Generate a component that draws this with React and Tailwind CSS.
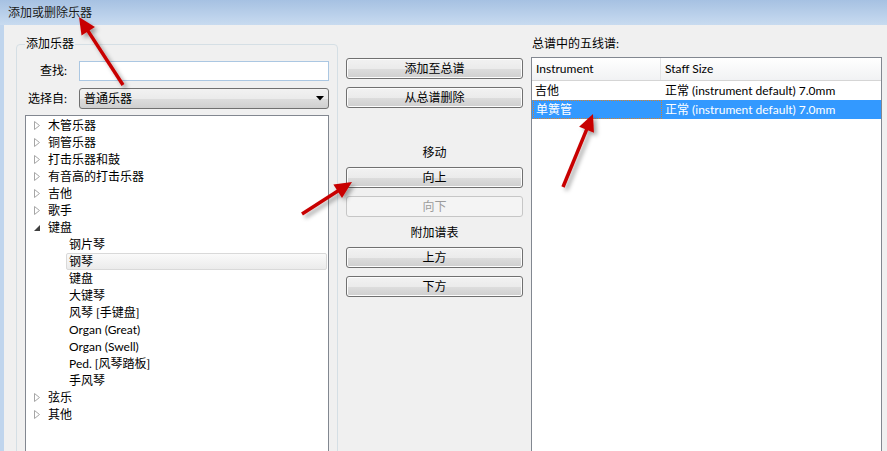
import React from "react";

const font = { fontFamily: 'Lato, "Noto Sans CJK SC", sans-serif' };

const tree = [
  { label: "木管乐器" },
  { label: "铜管乐器" },
  { label: "打击乐器和鼓" },
  { label: "有音高的打击乐器" },
  { label: "吉他" },
  { label: "歌手" },
  { label: "键盘", open: true },
  { label: "钢片琴", child: true },
  { label: "钢琴", child: true, hover: true },
  { label: "键盘", child: true },
  { label: "大键琴", child: true },
  { label: "风琴 [手键盘]", child: true },
  { label: "Organ (Great)", child: true },
  { label: "Organ (Swell)", child: true },
  { label: "Ped. [风琴踏板]", child: true },
  { label: "手风琴", child: true },
  { label: "弦乐" },
  { label: "其他" },
];

function Expander({ open }) {
  if (open) {
    return (
      <svg width="6" height="6" viewBox="0 0 6 6" className="shrink-0">
        <polygon points="6,0 6,6 0,6" fill="#404040" />
      </svg>
    );
  }
  return (
    <svg width="6" height="9" viewBox="0 0 6 9" className="shrink-0">
      <polygon points="0.5,0.5 5.5,4.5 0.5,8.5" fill="white" stroke="#a6a6a6" strokeWidth="1" />
    </svg>
  );
}

function Button({ children, disabled }) {
  return (
    <div
      className={
        disabled
          ? "h-[21px] rounded-[3px] border border-[#c6c6c6] bg-[#f4f4f4] text-[#9c9c9c] flex items-center justify-center text-[12px]"
          : "h-[21px] rounded-[3px] border border-[#707070] bg-[linear-gradient(#f2f2f2_0%,#ebebeb_50%,#dddddd_51%,#cfcfcf_100%)] shadow-[inset_0_0_0_1px_#fcfcfc] flex items-center justify-center text-[12px] text-black"
      }
    >
      {children}
    </div>
  );
}

function Arrow({ t, p }) {
  const dx = p[0] - t[0];
  const dy = p[1] - t[1];
  const len = Math.hypot(dx, dy);
  const ux = dx / len;
  const uy = dy / len;
  const nx = -uy;
  const ny = ux;
  const hl = 17;
  const hw = 8;
  const bx = p[0] - ux * hl;
  const by = p[1] - uy * hl;
  return (
    <g filter="url(#shadow)">
      <line x1={t[0]} y1={t[1]} x2={bx + ux * 2} y2={by + uy * 2} stroke="#c80000" strokeWidth="3.5" />
      <polygon
        points={`${p[0]},${p[1]} ${bx + nx * hw},${by + ny * hw} ${bx - nx * hw},${by - ny * hw}`}
        fill="#c80000"
      />
    </g>
  );
}

export default function App() {
  return (
    <div className="relative w-[887px] h-[451px] overflow-hidden flex flex-col text-[12px] text-black bg-[#f0f0f0]" style={font}>
      {/* title bar */}
      <div className="h-[25px] shrink-0 bg-[linear-gradient(#a6c1e2,#c8dbf0)] flex items-center pl-[8px] text-[#1a1a1a]">
        添加或删除乐器
      </div>

      <div className="flex-1 flex items-start border-l-4 border-[#c0d5ed]">
        {/* left group */}
        <fieldset className="ml-[12px] mt-[11px] w-[322px] h-[460px] border border-[#d5dfe5] rounded-[4px] pl-[7px] pr-[8px]">
          <legend className="ml-[1px] px-[1px] leading-[16px]">添加乐器</legend>
          <div className="grid grid-cols-[43px_250px] gap-x-[12px] gap-y-[7px] items-center mt-[9px]">
            <div className="text-right leading-[20px]">查找:</div>
            <div className="h-[20px] border border-[#abc7e2] bg-white" />
            <div className="text-right leading-[21px]">选择自:</div>
            <div className="h-[21px] rounded-[3px] border border-[#707070] bg-[linear-gradient(#f2f2f2_0%,#ebebeb_50%,#dddddd_51%,#cfcfcf_100%)] flex items-center justify-between pl-[4px] pr-[4px]">
              <span>普通乐器</span>
              <svg width="8" height="5" viewBox="0 0 8 5">
                <polygon points="0,0 8,0 4,4.5" fill="#000" />
              </svg>
            </div>
          </div>
          <div className="mt-[6px] ml-[1px] w-[304px] h-[360px] border border-[#828790] bg-white pt-[1px] pr-[1px]">
            {tree.map((item, i) => (
              <div key={i} className="h-[17px] flex items-center">
                {item.child ? (
                  <div
                    className={
                      item.hover
                        ? "ml-[40px] flex-1 h-[17px] flex items-center pl-[2px] rounded-[2px] border border-[#d9d9d9] bg-[linear-gradient(#fafafa,#ebebeb)]"
                        : "ml-[40px] flex-1 h-[17px] flex items-center pl-[3px]"
                    }
                  >
                    {item.label}
                  </div>
                ) : (
                  <div className="flex items-center">
                    <div className="w-[14px] ml-[8px] flex items-center">
                      <Expander open={item.open} />
                    </div>
                    <span>{item.label}</span>
                  </div>
                )}
              </div>
            ))}
          </div>
        </fieldset>

        {/* middle buttons */}
        <div className="ml-[8px] mt-[33px] w-[177px] flex flex-col">
          <Button>添加至总谱</Button>
          <div className="mt-[8px]">
            <Button>从总谱删除</Button>
          </div>
          <div className="mt-[37px] leading-[16px] text-center">移动</div>
          <div className="mt-[6px]">
            <Button>向上</Button>
          </div>
          <div className="mt-[8px]">
            <Button disabled>向下</Button>
          </div>
          <div className="mt-[8px] leading-[16px] text-center">附加谱表</div>
          <div className="mt-[6px]">
            <Button>上方</Button>
          </div>
          <div className="mt-[8px]">
            <Button>下方</Button>
          </div>
        </div>

        {/* right list */}
        <div className="ml-[8px] mt-[11px] w-[351px] flex flex-col">
          <div className="leading-[16px] pl-[1px]">总谱中的五线谱:</div>
          <div className="mt-[5px] h-[400px] border border-[#828790] bg-white">
            <div className="h-[23px] flex border-b border-[#d5d5d5] bg-[linear-gradient(#ffffff,#f1f2f4)]">
              <div className="w-[129px] border-r border-[#e3e4e6] flex items-center pl-[4px]">Instrument</div>
              <div className="flex-1 flex items-center pl-[4px]">Staff Size</div>
            </div>
            <div className="h-[19px] flex items-center">
              <div className="w-[129px] pl-[3px]">吉他</div>
              <div className="flex-1 pl-[4px]">正常 (instrument default) 7.0mm</div>
            </div>
            <div className="h-[19px] flex items-center bg-[#3399ff] text-white">
              <div className="w-[129px] h-[19px] ml-[1px] pl-[2px] flex items-center border border-dotted border-[#d9822b]">单簧管</div>
              <div className="flex-1 pl-[3px]">正常 (instrument default) 7.0mm</div>
            </div>
          </div>
        </div>
      </div>

      {/* annotation arrows */}
      <svg className="absolute inset-0 pointer-events-none" width="887" height="451">
        <defs>
          <filter id="shadow" x="-50%" y="-50%" width="200%" height="200%">
            <feDropShadow dx="3" dy="3" stdDeviation="2" floodColor="#000" floodOpacity="0.35" />
          </filter>
        </defs>
        <Arrow t={[123, 85]} p={[79, 17]} />
        <Arrow t={[302, 214]} p={[352, 182]} />
        <Arrow t={[563, 187]} p={[593, 114]} />
      </svg>
    </div>
  );
}
